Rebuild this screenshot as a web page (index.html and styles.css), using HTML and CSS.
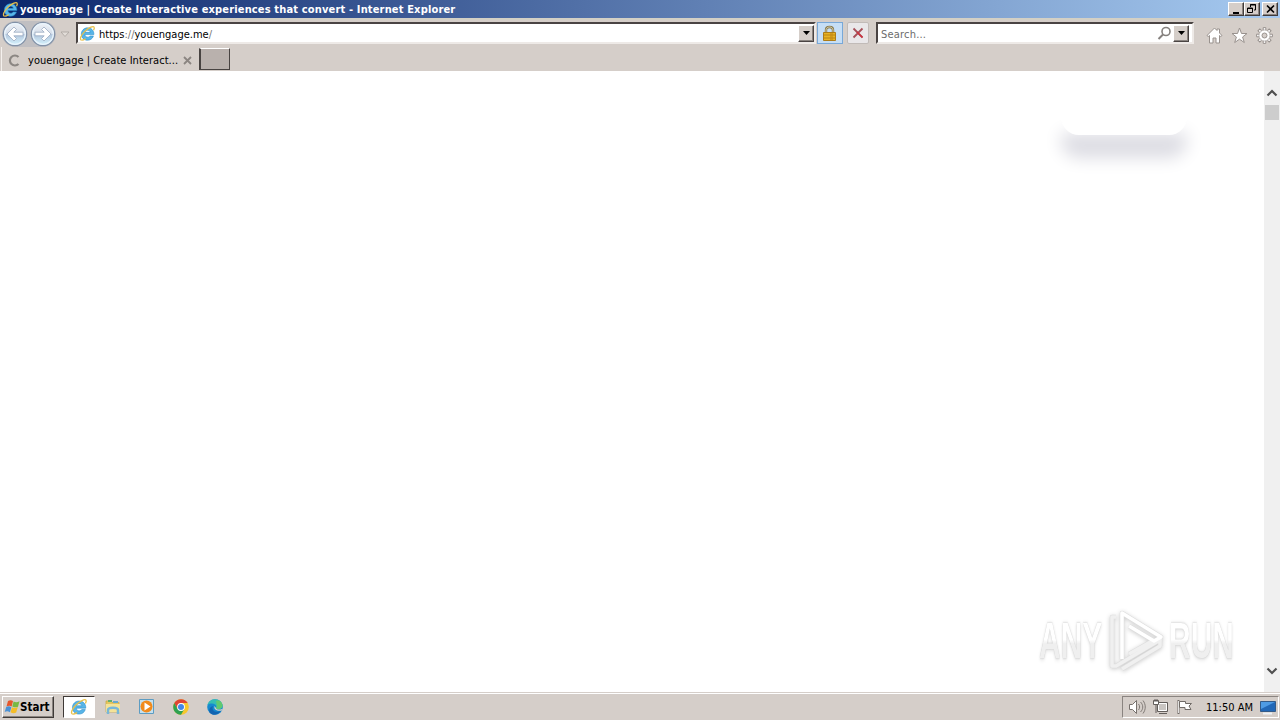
FILE: index.html
```
<!DOCTYPE html>
<html lang="en">

<head>
  <meta charset="UTF-8" />
  <title>youengage | Create Interactive experiences that convert</title>
  <link rel="stylesheet" href="styles.css">
</head>

<body>
  <svg class="defs" width="0" height="0">
    <symbol id="ie" viewBox="0 0 16 16">
      <path d="M14 9H5.600c.1 2.700 3.700 3.200 4.800 1.300h3.200c-1 2.900-3.100 4-5.600 4-3.500 0-5.800-2.500-5.800-5.700 0-3.400 2.500-5.900 5.900-5.900 3.900 0 6 2.700 5.900 6.300zM10.600 6.900c-.2-2.400-4.400-2.600-5 0z" fill="#58b5e8" stroke="#2188c6" stroke-width=".5" fill-rule="evenodd"/>
      <path d="M2.300 14.300C.2 13.700 1.800 9.600 5.300 6.200 8.700 2.800 13.200.6 14.200 1.900c.5.8.1 1.900-.5 3" fill="none" stroke="#e8c04a" stroke-width="1.200"/>
      <path d="M2.300 14.300c1 .2 2.500-.4 4-1.300" fill="none" stroke="#e8c04a" stroke-width="1.200"/>
    </symbol>
    <symbol id="arrow" viewBox="0 0 26 26">
      <circle cx="13" cy="13" r="11.700" fill="url(#ball)" stroke="#8291a7" stroke-width="1.200"/>
      <circle cx="13" cy="13" r="10.300" fill="none" stroke="#e9f4fc" stroke-width="1.200"/>
      <path d="M5 13l7-7 2.500 2.500-2.700 2.700H21v3.600h-9.200l2.700 2.700L12 20z" fill="#fff" stroke="#9babc2" stroke-width=".8"/>
    </symbol>
    <linearGradient id="ball" x2="0" y2="1">
      <stop offset="0" stop-color="#f0f3f8"/>
      <stop offset=".48" stop-color="#d5deea"/>
      <stop offset=".5" stop-color="#b2c5dc"/>
      <stop offset="1" stop-color="#d7f5ff"/>
    </linearGradient>
  </svg>

  <div class="screen">
    <div class="titlebar">
      <svg class="title-icon" width="17" height="17"><use href="#ie"/></svg>
      <span class="title">youengage | Create Interactive experiences that convert - Internet Explorer</span>
      <div class="win-buttons">
        <span class="win-btn"><svg width="12" height="10"><path d="M3 8h6v2H3z"/></svg></span>
        <span class="win-btn"><svg width="12" height="10"><path d="M4.500 3V.500h5V6H8M4 1h6M1.500 4h5v4.500h-5zM1 4.500h6" fill="none" stroke="#000"/></svg></span>
        <span class="win-btn close"><svg width="12" height="10"><path d="M3 1.500l7 7M10 1.500l-7 7" stroke="#000" stroke-width="1.600"/></svg></span>
      </div>
    </div>

    <div class="navbar">
      <div class="history">
        <svg width="26" height="26"><use href="#arrow"/></svg>
        <svg class="forward" width="26" height="26"><use href="#arrow"/></svg>
      </div>
      <svg class="history-more" width="10" height="7"><path d="M1 1h8L5 5.500z" fill="#e2ddd8" stroke="#aaa39e" stroke-width=".8"/></svg>
      <div class="field address">
        <svg width="17" height="17"><use href="#ie"/></svg>
        <span class="url">https<i>://</i>youengage.me<i>/</i></span>
        <span class="drop"><svg width="7" height="4"><path d="M0 0h7L3.500 4z"/></svg></span>
      </div>
      <span class="tool lock">
        <svg width="15" height="17">
          <path d="M4 9V5c0-4 7-4 7 0v4" fill="none" stroke="#85784e" stroke-width="2.400"/>
          <path d="M4 9V5c0-4 7-4 7 0v4" fill="none" stroke="#e6ddb5" stroke-width=".8"/>
          <path d="M1.500 7.500h12v8h-12z" fill="#e8b323" stroke="#ad7c18"/>
          <path d="M2 10h11M2 13h11" stroke="#b98415"/>
          <path d="M8 8h3v7H8z" fill="#c78a14" opacity=".6"/>
        </svg>
      </span>
      <span class="tool stop">
        <svg width="12" height="12"><path d="M1.500 1.500l9 9M10.500 1.500l-9 9" stroke="#a65059" stroke-width="1.800"/><path d="M5 5l5.500 5.500" stroke="#d22f3d" stroke-width="1.200"/></svg>
      </span>
      <div class="field search">
        <span class="hint">Search...</span>
        <svg width="15" height="15"><circle cx="9" cy="5.500" r="4" fill="none" stroke="#85817e" stroke-width="1.600"/><path d="M6 8.500L1.500 13" stroke="#85817e" stroke-width="2"/></svg>
        <span class="drop"><svg width="7" height="4"><path d="M0 0h7L3.500 4z"/></svg></span>
      </div>
      <div class="commands">
        <svg width="17" height="17"><path d="M1 8.500L8.500 1 11 3.500V2h2.500v4L16 8.500l-1.300 1-1.200-1V16h-3.500v-5H7v5H3.500V8.500l-1.200 1z" fill="#fff" stroke="#99928e"/></svg>
        <svg width="17" height="17"><path d="M8.500 1l2 5.500h5.500l-4.400 3.500 1.700 5.500-4.800-3.300-4.800 3.300L5.400 10 1 6.500h5.500z" fill="#fff" stroke="#99928e"/></svg>
        <svg width="17" height="17" viewBox="-8.500 -8.500 17 17">
          <path id="teeth" d="M-1.300-5.500v-2.400h2.600v2.400M-1.300 5.500v2.400h2.600V5.500M-5.500-1.300h-2.400v2.600h2.400M5.500-1.300h2.400v2.600H5.500" fill="#fff" stroke="#99928e"/>
          <use href="#teeth" transform="rotate(45)"/>
          <circle r="5.500" fill="#fff" stroke="#99928e" stroke-width=".6"/>
          <circle r="2.500" fill="#d5cec9" stroke="#99928e"/>
        </svg>
      </div>
    </div>

    <div class="tabs">
      <div class="tab">
        <svg class="spinner" width="13" height="13"><path d="M10.500 3A5 5 0 1 0 10.500 10" fill="none" stroke="#8c8783" stroke-width="2.200"/></svg>
        <span class="tab-text">youengage | Create Interact...</span>
        <svg class="tab-close" width="9" height="9"><path d="M1 1l7 7M8 1L1 8" stroke="#8b8581" stroke-width="1.800"/></svg>
      </div>
      <div class="new-tab"></div>
    </div>

    <div class="view">
      <div class="page">
        <div class="button-clip"><div class="button-shadow"></div></div>
        <div class="watermark">
          <span class="mark-text">ANY</span>
          <svg class="mark-play" width="58" height="64" viewBox="0 0 58 64" fill="none" stroke-linejoin="round">
            <path d="M15 50V4l39 24-7 4-25-15M9 8H5v49h4l44-26M15 60l38-23v-8M22 45l25-14" stroke="#dedede" stroke-width="4.500"/>
            <path d="M9 8H5v49h4l44-26M15 60l38-23v-8M22 45l25-14" stroke="#f0f0f0" stroke-width="3.500"/>
            <path d="M15 50V4l39 24-7 4-25-15" stroke="#fff" stroke-width="3.500"/>
          </svg>
          <span class="mark-text">RUN</span>
        </div>
      </div>
      <div class="scrollbar">
        <svg class="up" width="12" height="8"><path d="M1.500 6.500L6 2l4.500 4.500" fill="none" stroke="#505050" stroke-width="2.200"/></svg>
        <div class="thumb"></div>
        <svg class="down" width="12" height="8"><path d="M1.500 1.500L6 6l4.500-4.500" fill="none" stroke="#505050" stroke-width="2.200"/></svg>
      </div>
    </div>

    <div class="taskbar">
      <div class="start">
        <svg width="17" height="16" viewBox="0 0 17 16">
          <path d="M4 2c2-1.200 3.500-1 5 0L7.700 7.500C6 6.300 4.500 6.500 2.500 7.500z" fill="#e6572b"/>
          <path d="M9.600 2.500c2 1 3.900.8 5.900-.2L14 7.700c-2 1-3.500.8-5.700-.2z" fill="#78b943"/>
          <path d="M2.200 8c2-1 3.500-.8 5.200.2L5.900 13.300C4 12 2.500 12 .7 13z" fill="#4a91d5"/>
          <path d="M8 8.300c2 1 3.700.8 5.800-.2l-1.600 5.400c-2 1-3.700.8-5.700-.2z" fill="#f5bd28"/>
        </svg>
        <span>Start</span>
      </div>
      <div class="task active"><svg width="18" height="18"><use href="#ie"/></svg></div>
      <div class="task">
        <svg width="18" height="18">
          <path d="M2 3h5l1 1.500h7V14H2z" fill="#e4c75f" stroke="#c9a741" stroke-width=".7"/>
          <path d="M4 2h4v2H4z" fill="#62ae70"/><path d="M9 3h5v2H9z" fill="#68a9cf"/>
          <path d="M2 6h14v8H2z" fill="#f4e398"/>
          <path d="M4 16v-4c0-3 10-3 10 0v4" fill="none" stroke="#77b7d8" stroke-width="2.500"/>
        </svg>
      </div>
      <div class="task">
        <svg width="18" height="18">
          <path d="M1.500 1.500h14v14h-14z" fill="#c5e0ee" stroke="#5d9cc2"/>
          <circle cx="8.500" cy="8.500" r="6" fill="#f18a1b"/><path d="M6.500 4.500v8l6-4z" fill="#fff"/>
        </svg>
      </div>
      <div class="task">
        <svg width="18" height="18" viewBox="-9 -9 18 18">
          <circle r="7.800" fill="#f7c72c"/>
          <path d="M-6.750-3.900A7.800 7.800 0 0 1 6.750-3.900H0L-3.400 1.900z" fill="#df4434"/>
          <path d="M-6.750-3.900A7.800 7.800 0 0 0 0 7.800L3.400 1.900-3.400 1.900z" fill="#2fa151"/>
          <circle r="3.900" fill="#fff"/><circle r="3" fill="#4286e8"/>
        </svg>
      </div>
      <div class="task">
        <svg width="18" height="18">
          <circle cx="9" cy="9" r="7.800" fill="#1589cf"/>
          <path d="M1.500 7C3 0 14-1 16.500 6.500c1 4-3 6-6.500 4 2-4-4-7-8.500-3.500z" fill="#36bdb3"/>
          <path d="M10 3c3-1.500 6 1 6.500 4 .4 3-3 5-6.500 3.500l1-2.500z" fill="#61c970"/>
          <path d="M7 8c-2 5 3 7 8 5-3 4-8 5-11 2-2-3 0-6 3-7z" fill="#1364b1"/>
          <path d="M8.500 8c-1 4 3 5.500 7.500 4.500 1-1 .5-1.500 0-1.500-3 1-6 .5-6-1z" fill="#d5cec9"/>
        </svg>
      </div>
      <div class="tray">
        <svg width="18" height="16">
          <path d="M1.500 5.500h3L8.500 1.500v13l-4-4h-3z" fill="#fff" stroke="#77716d"/>
          <path d="M10.500 5c1.500 2 1.500 4 0 6M12.500 3c3 3 3 7 0 10M15 1.500c3 4 3 9 0 13" fill="none" stroke="#77716d" stroke-width=".9"/>
        </svg>
        <svg class="network" width="17" height="16">
          <path d="M5.500 3.500h10v9h-10z" fill="#c9c5c2" stroke="#625d5a"/><path d="M6.500 4.500h8v7h-8z" fill="none" stroke="#fff"/>
          <path d="M1.500 1.500h5v4h-5z" fill="#fff" stroke="#625d5a"/><path d="M3 0v3M5 0v3M4 6v8M7 14.500h8" stroke="#625d5a"/>
        </svg>
        <svg class="flag" width="17" height="16"><path d="M2.500 1v14" stroke="#706b67" stroke-width="2"/><path d="M2.500 2v12" stroke="#fff" stroke-width=".8"/><path d="M3.500 2.500h6v2h6L13 7l2 3.500H9v-2H3.500z" fill="#fff" stroke="#706b67"/></svg>
        <span class="clock">11:50 AM</span>
        <svg class="desktop" width="16" height="15"><path d="M.5 1.500h15v10H.5z" fill="#2268b7" stroke="#345b88"/><path d="M1 2h14L1 9z" fill="#4e9be4"/><path d="M3 13.500h9" stroke="#edf2f6" stroke-width="2"/></svg>
      </div>
    </div>
  </div>
</body>

</html>
```
FILE: styles.css
```
* {
  box-sizing: border-box;
}

body {
  margin: 0;
  font-family: "DejaVu Sans Condensed", "DejaVu Sans", sans-serif;
  font-stretch: condensed;
  font-size: 11px;
  color: #000;
}

svg {
  display: block;
  flex: none;
}

.defs {
  position: absolute;
}

.screen {
  width: 1280px;
  height: 720px;
  display: flex;
  flex-direction: column;
  background: #d5cec9;
  overflow: hidden;
  white-space: nowrap;
}

/* title bar */
.titlebar {
  height: 18px;
  display: flex;
  align-items: center;
  padding: 0 2px;
  background: linear-gradient(90deg, #0b266b, #a6caf0);
}

.title {
  width: 440px;
  margin-left: 1px;
  color: #fff;
  font-weight: bold;
  letter-spacing: .155px;
}

.win-buttons {
  display: flex;
  margin-left: auto;
}

.win-btn {
  width: 16px;
  height: 14px;
  padding: 1px;
  background: #d5cec9;
  border: 1px solid;
  border-color: #fff #403c3a #403c3a #fff;
  box-shadow: inset -1px -1px #8a8480;
}

.close {
  margin-left: 2px;
}

/* navigation */
.navbar {
  height: 29px;
  display: flex;
  align-items: flex-start;
  padding: 2px 7px 0 2px;
  border-top: 2px solid #d3d0c5;
}

.history {
  display: flex;
  gap: 2px;
  height: 26px;
  margin-top: -1px;
  border-radius: 13px;
  background: #c0bfc2;
}

.forward {
  transform: scaleX(-1);
}

.history-more {
  margin: 9px 6px 0 4px;
}

.field {
  height: 22px;
  display: flex;
  align-items: center;
  background: #fff;
  border: 2px solid;
  border-color: #4a4443 #eeeae7 #eeeae7 #4a4443;
}

.address {
  width: 740px;
  padding-left: 1px;
}

.url,
.hint {
  padding-top: 2px;
}

.url {
  margin-left: 3px;
}

.url i {
  font-style: normal;
  color: #777;
}

.drop {
  width: 16px;
  height: 17px;
  display: flex;
  align-items: center;
  justify-content: center;
  margin-left: auto;
  background: #d5cec9;
  border: 1px solid;
  border-color: #fff #4a4443 #4a4443 #fff;
  box-shadow: inset -1px -1px #8a8480;
}

.tool {
  height: 22px;
  display: flex;
  align-items: center;
  justify-content: center;
  border: 1px solid #f8f6f5;
}

.lock {
  width: 26px;
  margin-left: 1px;
  padding-right: 1px;
  background: #c6def5;
  border-color: #78a8d8;
}

.stop {
  width: 22px;
  margin-left: 4px;
  background: #e9e7e9;
  border-color: #c1bbb8;
  border-radius: 2px;
}

.search {
  width: 318px;
  margin-left: 7px;
  padding: 0 3px;
}

.hint {
  color: #6c6c6c;
  letter-spacing: .2px;
}

.search svg:first-of-type {
  margin-left: auto;
}

.search .drop {
  margin-left: 1px;
}

.search .drop svg {
  margin-left: 0;
}

.commands {
  display: flex;
  gap: 8px;
  margin: 5px 0 0 auto;
}

/* tabs */
.tabs {
  height: 24px;
  display: flex;
  padding-left: 1px;
}

.tab {
  width: 198px;
  display: flex;
  align-items: center;
  padding: 2px 7px 0;
  border-left: 1px solid #f5f1ee;
}

.spinner {
  margin-left: -1px;
}

.tab-text {
  width: 155px;
  margin-left: 7px;
  letter-spacing: .04px;
}

.new-tab {
  width: 31px;
  height: 22px;
  margin-top: 1px;
  background: #b9b1ad;
  border: 1px solid;
  border-color: #fff #484341 #484341;
  border-left-width: 2px;
}

/* content */
.view {
  height: 621px;
  display: flex;
  background: #fff;
}

.page {
  flex: 1;
  display: flex;
  flex-direction: column;
  align-items: flex-end;
  justify-content: space-between;
}

.button-clip {
  width: 160px;
  height: 80px;
  margin: 39px 60px 0 0;
  overflow: hidden;
}

.button-shadow {
  width: 126px;
  height: 25px;
  margin: 0 auto;
  background: #fff;
  border-radius: 0 0 18px 18px;
  box-shadow: 0 23px 17px 0 #dcdce3;
}

.watermark {
  display: flex;
  align-items: center;
  height: 68px;
  margin: 0 31px 17px 0;
  font-family: "Liberation Sans", sans-serif;
  font-stretch: normal;
  font-size: 50px;
  font-weight: bold;
  line-height: 68px;
}

.mark-text {
  width: 64px;
  color: transparent;
  background: linear-gradient(#fff 48%, #efefef 54%);
  background-clip: text;
  -webkit-background-clip: text;
  /* the glyphs run past the 64px box before scaling */
  padding-right: 42px;
  margin-right: -42px;
  box-sizing: content-box;
  transform: scaleX(.6);
  transform-origin: left;
  filter: drop-shadow(0 0 1px #ccc) drop-shadow(0 1px 2px #ddd);
}

.mark-play {
  margin: 0 4px 0 4px;
  filter: drop-shadow(0 1px 2px #ccc);
}

.scrollbar {
  width: 16px;
  display: flex;
  flex-direction: column;
  align-items: center;
  background: #f0f0f0;
}

.up {
  margin-top: 18px;
}

.thumb {
  width: 14px;
  height: 15px;
  margin-top: 8px;
  background: #cdcdcd;
}

.down {
  margin: auto 0 17px;
}

/* taskbar */
.taskbar {
  height: 28px;
  display: flex;
  align-items: flex-start;
  padding: 2px 1px 0 2px;
  border-top: 1px solid #d5cec9;
  box-shadow: inset 0 1px #fff;
}

.start {
  width: 52px;
  height: 22px;
  margin-top: 1px;
  display: flex;
  align-items: center;
  padding-left: 1px;
  border: 1px solid;
  border-color: #fff #3f3a37 #3f3a37 #fff;
  box-shadow: inset -1px -1px #8a8480;
  font-weight: bold;
  font-size: 11.5px;
}

.start span {
  margin-left: -1px;
}

.task {
  width: 34px;
  height: 23px;
  display: flex;
  align-items: center;
  justify-content: center;
}

.active {
  width: 32px;
  height: 22px;
  margin: 1px 1px 0 9px;
  background: #fff;
  border: 1px solid;
  border-color: #3f3a37 #fff #fff #3f3a37;
}

.tray {
  width: 157px;
  height: 22px;
  display: flex;
  align-items: center;
  margin: 1px 0 0 auto;
  padding-left: 5px;
  border: 1px solid;
  border-color: #8a8480 #fff #fff #8a8480;
}

.network {
  margin-left: 6px;
}

.flag {
  margin-left: 7px;
}

.clock {
  width: 50px;
  margin-left: 13px;
}

.desktop {
  margin-left: 4px;
}
```
